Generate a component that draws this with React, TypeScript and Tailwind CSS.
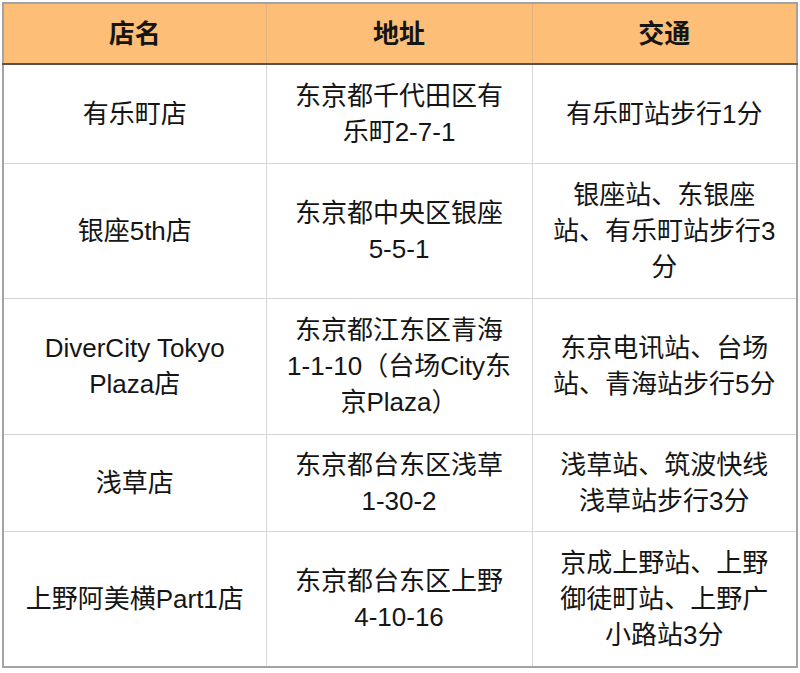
const rows = [
  { name: '有乐町店', address: '东京都千代田区有乐町2-7-1', access: '有乐町站步行1分', h: 'h-[99px]' },
  { name: '银座5th店', address: '东京都中央区银座5-5-1', access: '银座站、东银座站、有乐町站步行3分', h: 'h-[135px]' },
  {
    name: 'DiverCity Tokyo Plaza店',
    address: '东京都江东区青海1-1-10（台场City东京Plaza）',
    access: '东京电讯站、台场站、青海站步行5分',
    h: 'h-[136px]',
  },
  { name: '浅草店', address: '东京都台东区浅草1-30-2', access: '浅草站、筑波快线浅草站步行3分', h: 'h-[97px]' },
  { name: '上野阿美横Part1店', address: '东京都台东区上野4-10-16', access: '京成上野站、上野御徒町站、上野广小路站3分', h: 'h-[136px]' },
];

export default function App() {
  return (
    <div
      className="w-[800px] h-[673px] bg-white p-[2px] text-[#151515]"
      style={{ fontFamily: '"Liberation Sans", "Noto Sans CJK SC", sans-serif' }}
    >
      <table className="w-[794px] table-fixed border-collapse border-2 border-[#a3a3a3] text-[26px] leading-[36px]">
        <colgroup>
          <col className="w-[263px]" />
          <col className="w-[266px]" />
          <col className="w-[265px]" />
        </colgroup>
        <thead>
          <tr className="h-[61px] bg-[#fdbf77] border-b-2 border-[#5b5149]">
            <th className="border-r border-[#e2b27a] font-bold">店名</th>
            <th className="border-r border-[#e2b27a] font-bold">地址</th>
            <th className="font-bold">交通</th>
          </tr>
        </thead>
        <tbody>
          {rows.map((r) => (
            <tr key={r.name} className={`${r.h} border-b border-[#d8d8d8]`}>
              <td className="border-r border-[#d8d8d8] px-[16px] text-center">{r.name}</td>
              <td className="border-r border-[#d8d8d8] px-[19px] text-center">{r.address}</td>
              <td className="px-[17px] text-center">{r.access}</td>
            </tr>
          ))}
        </tbody>
      </table>
    </div>
  );
}
